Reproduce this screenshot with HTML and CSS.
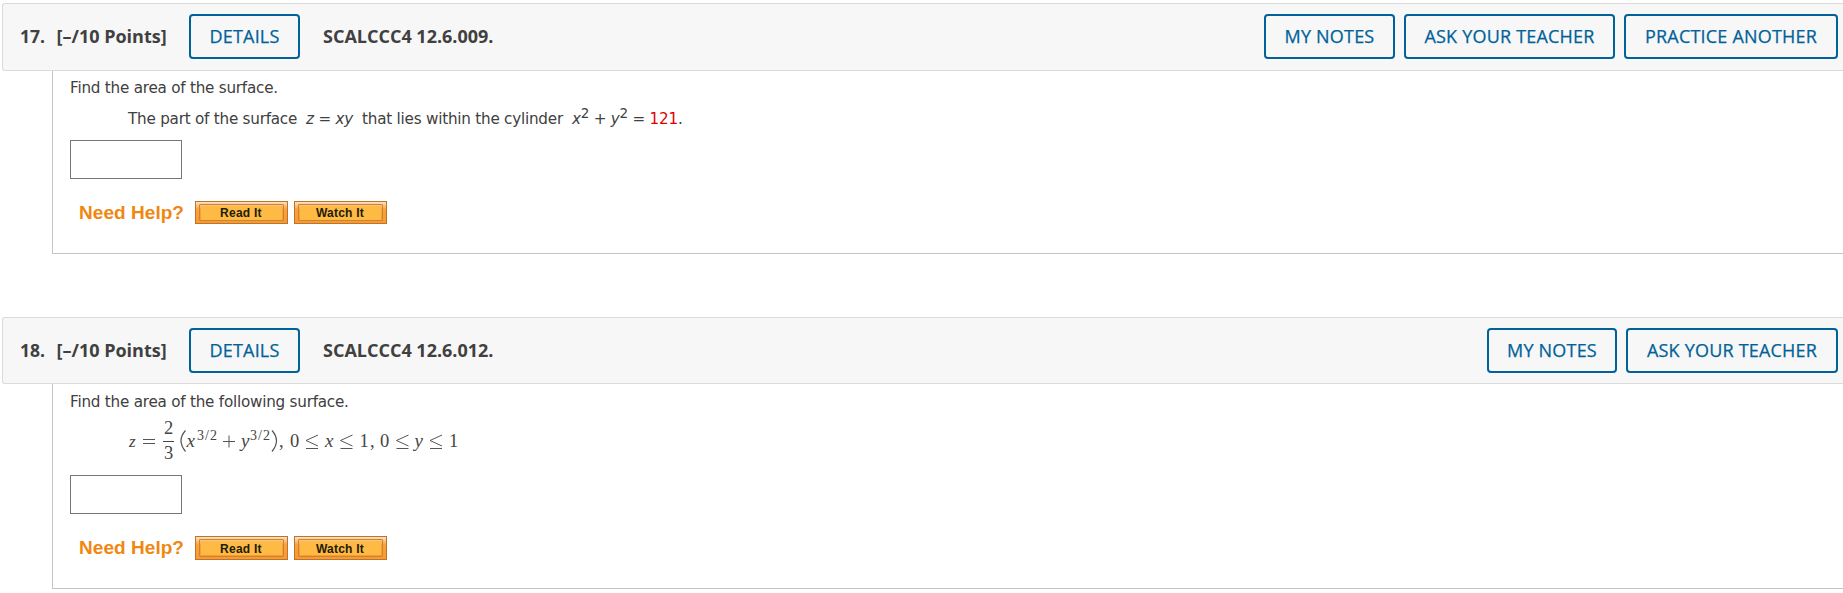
FILE: index.html
```html
<!DOCTYPE html>
<html lang="en">
<head>
<meta charset="utf-8">
<title>Questions</title>
<link rel="stylesheet" href="styles.css">
</head>
<body>
<section class="question">
  <header class="bar">
    <span class="num">17.</span>
    <span class="points">[–/10 Points]</span>
    <button class="btn details">DETAILS</button>
    <span class="code">SCALCCC4 12.6.009.</span>
    <div class="actions">
      <button class="btn notes">MY NOTES</button>
      <button class="btn ask">ASK YOUR TEACHER</button>
      <button class="btn practice">PRACTICE ANOTHER</button>
    </div>
  </header>
  <div class="content">
    <p class="prompt">Find the area of the surface.</p>
    <p class="statement"><span>The part of the surface</span><span class="eq"><i>z</i> = <i>xy</i></span><span>that lies within the cylinder</span><span class="eq"><i>x</i><sup>2</sup> + <i>y</i><sup>2</sup> = <span class="red">121</span>.</span></p>
    <input class="answer" type="text" aria-label="Answer">
    <div class="help"><span class="need">Need Help?</span><button class="gold">Read It</button><button class="gold">Watch It</button></div>
  </div>
</section>
<section class="question second">
  <header class="bar">
    <span class="num">18.</span>
    <span class="points">[–/10 Points]</span>
    <button class="btn details">DETAILS</button>
    <span class="code">SCALCCC4 12.6.012.</span>
    <div class="actions">
      <button class="btn notes">MY NOTES</button>
      <button class="btn ask">ASK YOUR TEACHER</button>
    </div>
  </header>
  <div class="content">
    <p class="prompt">Find the area of the following surface.</p>
    <svg class="formula" width="340" height="46" viewBox="0 0 340 46">
      <g class="digits">
        <text x="36" y="15">2</text><text x="36" y="40">3</text>
        <text x="162" y="28">0</text><text x="231.500" y="28">1</text><text x="242" y="28">,</text>
        <text x="252" y="28">0</text><text x="321" y="28">1</text><text x="151" y="28">,</text>
      </g>
      <g class="vars">
        <text x="1" y="28" class="z">z</text><text x="58.500" y="28">x</text><text x="113" y="28">y</text>
        <text x="197" y="28">x</text><text x="286.500" y="28">y</text>
      </g>
      <g class="sups"><text x="69" y="21">3/2</text><text x="122" y="21">3/2</text></g>
      <path class="rule" d="M35 22.500H46"/>
      <path class="stroke" d="M15 20.500H27M15 24.500H27M95 22.500H107M101 16.500V28.500"/>
      <path class="stroke" d="M190 16L178 21.500L190 27M178 29.500H190M224.500 16L212.500 21.500L224.500 27M212.500 29.500H224.500M280.500 16L268.500 21.500L280.500 27M268.500 29.500H280.500M314 16L302 21.500L314 27M302 29.500H314"/>
      <path class="stroke paren" d="M57.500 11.500Q48.500 21.500 57.500 32.500M144 11.500Q153 21.500 144 32.500"/>
    </svg>
    <input class="answer" type="text" aria-label="Answer">
    <div class="help"><span class="need">Need Help?</span><button class="gold">Read It</button><button class="gold">Watch It</button></div>
  </div>
</section>
</body>
</html>
```
FILE: styles.css
```css
* { box-sizing: border-box; }
body { margin: 0; height: 593px; overflow: hidden; background: #fff; padding: 3px 0 0 2px; color: #404040; }
p { margin: 0; }
button { padding: 0; }
.question { height: 314px; }
.question.second { height: 272px; }
.bar {
  display: flex; align-items: center; height: 68px; padding: 0 5px 1px 17px;
  border: 1px solid #dbdbdb; border-right: 0; border-radius: 3px 0 0 3px; background: #f7f7f7;
  font: 700 18px/24px "Open Sans", sans-serif; white-space: nowrap;
}
.second .bar { height: 67px; padding-bottom: 0; }
.bar > * { flex: none; }
.num { width: 36.5px; padding-bottom: 2px; font-size: 17.5px; }
.points { width: 132.5px; padding-bottom: 1px; }
.code { margin-left: 23px; padding-bottom: 1px; }
.btn {
  height: 45px; padding-bottom: 1px; border: 2px solid #006298; border-radius: 4px; background: #f7f7f7; color: #006298;
  font: 500 18px/24px "Open Sans", sans-serif; letter-spacing: 0.2px; white-space: nowrap;
  -webkit-text-stroke: 0.25px #006298;
}
.details { width: 111px; }
.actions { display: flex; gap: 9px; margin-left: auto; }
.notes { width: 131px; }
.ask { width: 211px; }
.second .notes { width: 130px; }
.second .ask { width: 212px; }
.practice { width: 214px; }
.content {
  height: 183px; margin-left: 50px; padding: 7px 0 0 17px;
  border-left: 1px solid #c4c4c4; border-bottom: 1px solid #c4c4c4;
  font: 15.2px/20px "DejaVu Sans", sans-serif; letter-spacing: -0.23px;
}
.second .content { height: 205px; padding-top: 8px; }
.prompt { height: 20px; }
.statement { display: flex; gap: 9px; height: 20px; margin: 11px 0 0 58px; white-space: nowrap; }
.statement sup { font-size: 13.5px; line-height: 0; vertical-align: 6px; }
.red { color: #e00000; }
.answer { display: block; width: 112px; height: 39px; margin-top: 11px; padding: 0; border: 1px solid #767676; background: #fff; }
.help { display: flex; align-items: center; height: 23px; margin: 22px 0 0 9px; }
.need { width: 116px; color: #f08712; font: 700 19px/22px "Liberation Sans", sans-serif; letter-spacing: 0.05px; white-space: nowrap; }
.second .need { padding-bottom: 1px; }
.gold {
  width: 93px; height: 100%; margin-right: 6px; padding: 1px 1px 0 0; border: 1px solid #b8752c; border-radius: 0;
  background: linear-gradient(#fdba45, #fdba45) 5px 4px / 81px 14px no-repeat, linear-gradient(#ffe0c4, #fba03c 35%, #fb9830);
  position: relative; color: #241a08; font: 700 12px/20px "Liberation Sans", sans-serif; letter-spacing: 0.25px;
}
.gold::after { content: ""; position: absolute; inset: 2px 3px; border: 1px solid #c98532; border-radius: 1px; }
.formula { display: block; margin: 7px 0 0 58px; letter-spacing: 0; }
.second .answer { margin-top: 10px; }
.second .help { height: 24px; }
.digits, .vars, .sups { font-family: "Liberation Serif", serif; fill: #444; }
.digits { font-size: 18.500px; }
.vars { font-size: 19px; font-style: italic; }
.z { font-size: 17px; }
.sups { font-size: 14px; letter-spacing: 1px; }
.rule { stroke: #444; }
.stroke { fill: none; stroke: #555; stroke-width: 1; }
.paren { stroke-width: 1.2; }
```
